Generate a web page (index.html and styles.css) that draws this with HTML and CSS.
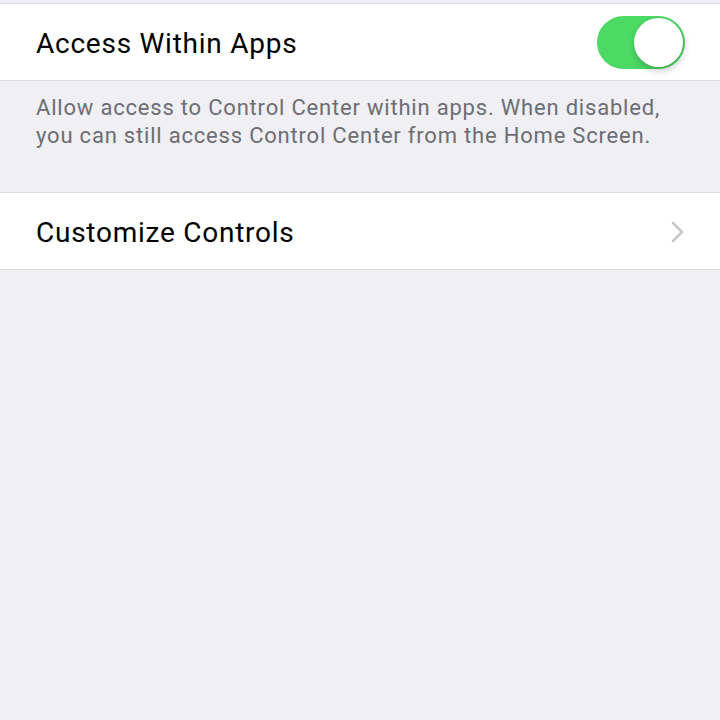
FILE: index.html
```html
<!DOCTYPE html>
<html lang="en">
<head>
    <meta charset="UTF-8">
    <meta name="viewport" content="width=device-width, initial-scale=1.0">
    <title>Control Center</title>
    <link rel="stylesheet" href="styles.css">
</head>
<body>
    <div class="top-gap"></div>
    <div class="group">
        <div class="row">
            <span class="row-label">Access Within Apps</span>
            <div class="switch on">
                <div class="knob"></div>
            </div>
        </div>
    </div>
    <p class="footer">Allow access to Control Center within apps. When disabled, you can still access Control Center from the Home Screen.</p>
    <div class="group">
        <div class="row">
            <span class="row-label">Customize Controls</span>
            <svg class="chevron" width="14" height="22" viewBox="0 0 14 22">
                <path d="M2 2 L11 11 L2 20" fill="none" stroke="#c7c7cc" stroke-width="2.6" stroke-linecap="round" stroke-linejoin="round"/>
            </svg>
        </div>
    </div>
</body>
</html>
```

FILE: styles.css
```css
body {
    margin: 0;
    background: #efeff4;
    font-family: Roboto, "Liberation Sans", sans-serif;
    height: 720px;
}
.top-gap {
    height: 3px;
}
.group {
    background: #fff;
    border-top: 1px solid #dcdce0;
    border-bottom: 1px solid #dcdce0;
}
.row {
    height: 76px;
    display: flex;
    align-items: center;
    justify-content: space-between;
    padding: 0 35px 0 36px;
}
.row-label {
    font-size: 28px;
    letter-spacing: 0.75px;
    color: #000;
    padding-top: 3px;
}
.switch {
    width: 88px;
    height: 53px;
    border-radius: 27px;
    background: #4cd964;
    display: flex;
    align-items: center;
    justify-content: flex-end;
    padding: 0 2px;
    box-sizing: border-box;
}
.knob {
    width: 49px;
    height: 49px;
    border-radius: 50%;
    background: #fff;
    box-shadow: 1px 4px 7px rgba(0,0,0,0.2), 0 0 0 1px rgba(0,0,0,0.04);
}
.footer {
    margin: 0;
    padding: 13px 36px 42px;
    font-size: 22px;
    letter-spacing: 0.8px;
    line-height: 28px;
    color: #6d6d72;
}
.chevron {
    display: block;
    margin-top: 2px;
}
```
